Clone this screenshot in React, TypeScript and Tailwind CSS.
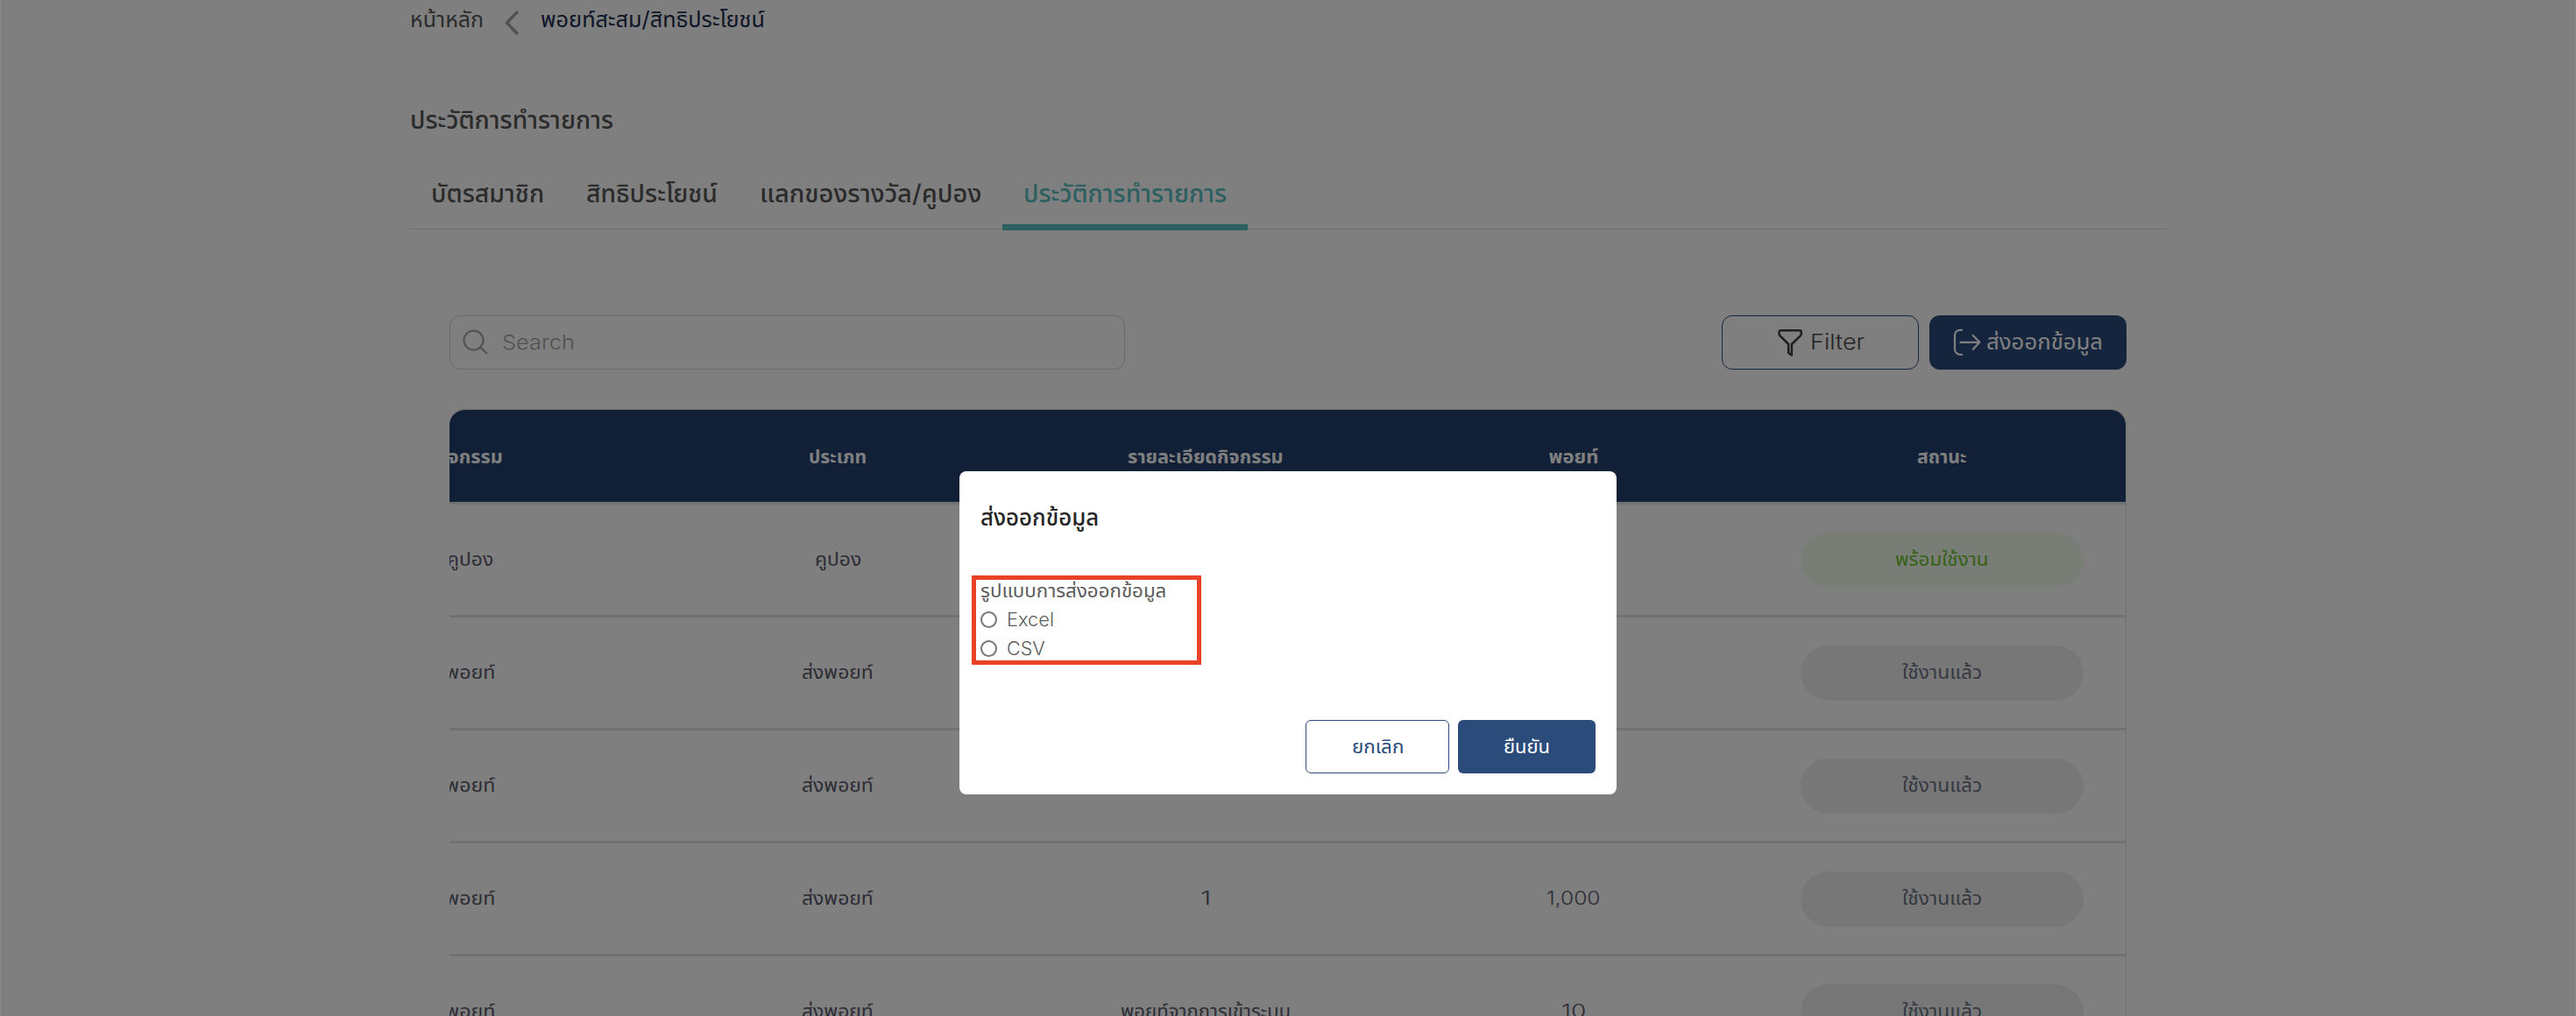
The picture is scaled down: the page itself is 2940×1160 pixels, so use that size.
import React, { useLayoutEffect, useRef, useState } from "react";

/** Single line of text stretched horizontally to an exact width. */
function Fit({ w, children }: { w: number; children: string }) {
  const ref = useRef<HTMLSpanElement>(null);
  const [k, setK] = useState(1);
  useLayoutEffect(() => {
    if (ref.current && ref.current.offsetWidth) setK(w / ref.current.offsetWidth);
  }, [w]);
  return (
    <span className="inline-block shrink-0 text-left align-top whitespace-nowrap" style={{ width: w }}>
      <span ref={ref} className="inline-block origin-left" style={{ transform: `scaleX(${k})` }}>
        {children}
      </span>
    </span>
  );
}

type Cell = [text: string, width: number];

const columns: Cell[] = [
  ["กิจกรรม", 76],
  ["ประเภท", 66],
  ["รายละเอียดกิจกรรม", 178],
  ["พอยท์", 57],
  ["สถานะ", 57],
];

const used: Cell = ["ใช้งานแล้ว", 91];
const point: Cell = ["พอยท์", 57];
const send: Cell = ["ส่งพอยท์", 82];

const rows: Cell[][] = [
  [["คูปอง", 53], ["คูปอง", 53], ["", 0], ["", 0], ["พร้อมใช้งาน", 107]],
  [point, send, ["", 0], ["", 0], used],
  [point, send, ["", 0], ["", 0], used],
  [point, send, ["1", 12], ["1,000", 62], used],
  [point, send, ["พอยท์จากการเข้าระบบ", 194], ["10", 28], used],
];

const tabs = [
  { label: "บัตรสมาชิก", width: 129, active: false },
  { label: "สิทธิประโยชน์", width: 150, active: false },
  { label: "แลกของรางวัล/คูปอง", width: 253, active: false },
  { label: "ประวัติการทำรายการ", width: 232, active: true },
];

function SearchIcon() {
  return (
    <svg className="h-[30px] w-[30px]" viewBox="0 0 30 30" fill="none" stroke="#a0a4ac" strokeWidth="2.2" strokeLinecap="round">
      <circle cx="12.500" cy="12.500" r="11" />
      <path d="m20.500 20.500 7 7" />
    </svg>
  );
}

function FunnelIcon() {
  return (
    <svg className="h-8 w-[30px]" viewBox="0 0 30 32" fill="none" stroke="#3c3c3c" strokeWidth="2.5" strokeLinejoin="round">
      <path d="M4.6 2.2h21.2c1.2 0 2 .9 2 2.1v1.6c0 1-.5 2-1.2 2.7L16.9 18v12.5L13.2 28V18L3.8 8.6C3 7.900 2.500 7 2.500 5.900V4.300c0-1.200.9-2.100 2.100-2.100Z" />
    </svg>
  );
}

function ExportIcon() {
  return (
    <svg className="h-[34px] w-8" viewBox="0 0 32 34" fill="none" stroke="#fff" strokeWidth="2.200" strokeLinecap="round" strokeLinejoin="round">
      <path d="M10 2.800H8a6 6 0 0 0-6 6v16a6 6 0 0 0 6 6h2M8.500 16.800H30M22.800 9l7.600 7.800-7.600 8" />
    </svg>
  );
}

function Radio({ label, width }: { label: string; width: number }) {
  return (
    <label className="flex h-[33px] items-center text-[21px] leading-[33px] font-light">
      <span className="mr-[11px] h-[19px] w-[19px] rounded-full border-2 border-[#767676]" />
      <Fit w={width}>{label}</Fit>
    </label>
  );
}

export default function App() {
  return (
    <div className="relative h-[1160px] w-[2940px] overflow-hidden bg-white font-['Inter','Noto_Sans_Thai',sans-serif] text-[#565656]">
      <div className="ml-[468px] w-[2004px]">
        <nav className="flex h-11 items-center text-[25px] leading-[44px]">
          <Fit w={84}>หน้าหลัก</Fit>
          <svg className="mt-[7px] mr-[25px] ml-6 h-7 w-4" viewBox="0 0 16 28" fill="none" stroke="#a5a5a5" strokeWidth="3.500" strokeLinecap="round" strokeLinejoin="round">
            <path d="M14 2 2.500 14 14 26" />
          </svg>
          <span className="text-[#1b2c4f]">
            <Fit w={256}>พอยท์สะสม/สิทธิประโยชน์</Fit>
          </span>
        </nav>
        <h1 className="mt-[72px] h-[42px] text-[28px] leading-[42px] font-medium">
          <Fit w={232}>ประวัติการทำรายการ</Fit>
        </h1>
        <div className="mt-[34px] flex h-[70px] border-b border-[#dedede] text-[28px] leading-[58px] font-medium">
          {tabs.map((t) => (
            <div key={t.label} className={t.active ? "h-[71px] border-b-[7px] border-[#58bebe] px-6 text-[#58bebe]" : "h-[71px] px-6"}>
              <Fit w={t.width}>{t.label}</Fit>
            </div>
          ))}
        </div>
      </div>

      <div className="mt-[98px] ml-[513px] w-[1914px]">
        <div className="flex h-[62px]">
          <div className="flex w-[771px] items-center rounded-xl border border-[#ccd0d6] pl-[14px] text-[23px] font-light text-[#a4a4a4]">
            <SearchIcon />
            <span className="ml-[15px]">
              <Fit w={83}>Search</Fit>
            </span>
          </div>
          <div className="ml-auto flex gap-3">
            <div className="flex w-[225px] items-center justify-center gap-2 rounded-xl border border-[#2b4b7b] text-[24px] font-light text-[#484848]">
              <FunnelIcon />
              <Fit w={62}>Filter</Fit>
            </div>
            <div className="flex w-[225px] items-center justify-center gap-1.5 rounded-xl bg-[#2b4b7b] text-[25px] text-white">
              <ExportIcon />
              <Fit w={133}>ส่งออกข้อมูล</Fit>
            </div>
          </div>
        </div>

        <div className="mt-[45px] overflow-hidden rounded-t-[18px] border-t border-r border-[#e4e4e4] text-[22px] leading-8">
          <div className="-ml-[187px] grid h-[105px] grid-cols-[repeat(5,420px)] items-center bg-[#22406c] text-center font-bold text-white">
            {columns.map(([text, w]) => (
              <div key={text}>
                <Fit w={w}>{text}</Fit>
              </div>
            ))}
          </div>
          {rows.map((row, i) => (
            <div key={i} className="-ml-[187px] grid h-[129px] grid-cols-[repeat(5,420px)] items-center border-t-[3px] border-[#e1e2e6] text-center text-[#5c5a6c]">
              {row.slice(0, 4).map(([text, w], j) => (
                <div key={j} className={j > 1 && w < 100 ? "text-[21px] font-light" : "pb-0.5"}>
                  {text && <Fit w={w}>{text}</Fit>}
                </div>
              ))}
              <div
                className={
                  i === 0
                    ? "mx-auto h-[63px] w-[323px] rounded-full bg-[#f1fcec] pt-[14px] text-[#6cc22e]"
                    : "mx-auto h-[63px] w-[323px] rounded-full bg-[#eeeef1] pt-[14px] text-[#6b7280]"
                }
              >
                <Fit w={row[4][1]}>{row[4][0]}</Fit>
              </div>
            </div>
          ))}
        </div>
      </div>

      <div className="absolute inset-0 flex items-start justify-center border-x border-[#8a8a8a] bg-black/50">
        <div className="mt-[538px] flex h-[369px] w-[750px] flex-col rounded-lg bg-white">
          <h2 className="mt-[34px] ml-6 h-[38px] text-[26px] leading-[38px] font-medium text-[#262626]">
            <Fit w={135}>ส่งออกข้อมูล</Fit>
          </h2>
          <div className="mt-[47px] ml-[14px] h-[102px] w-[262px] border-[5px] border-[#ea4127] pl-[5px] text-[22px] leading-[33px] text-[#5c5c5c]">
            <div className="-mt-[4px] h-[33px]">
              <Fit w={212}>รูปแบบการส่งออกข้อมูล</Fit>
            </div>
            <Radio label="Excel" width={54} />
            <Radio label="CSV" width={44} />
          </div>
          <div className="mt-[63px] mr-6 flex h-[61px] justify-end gap-[10px] text-[22px]">
            <button className="flex w-[164px] items-center justify-center rounded-md border border-[#2b4b7b] text-[#2b4b7b]">
              <Fit w={59}>ยกเลิก</Fit>
            </button>
            <button className="flex w-[157px] items-center justify-center rounded-md bg-[#2b4b7b] text-white">
              <Fit w={53}>ยืนยัน</Fit>
            </button>
          </div>
        </div>
      </div>
    </div>
  );
}
